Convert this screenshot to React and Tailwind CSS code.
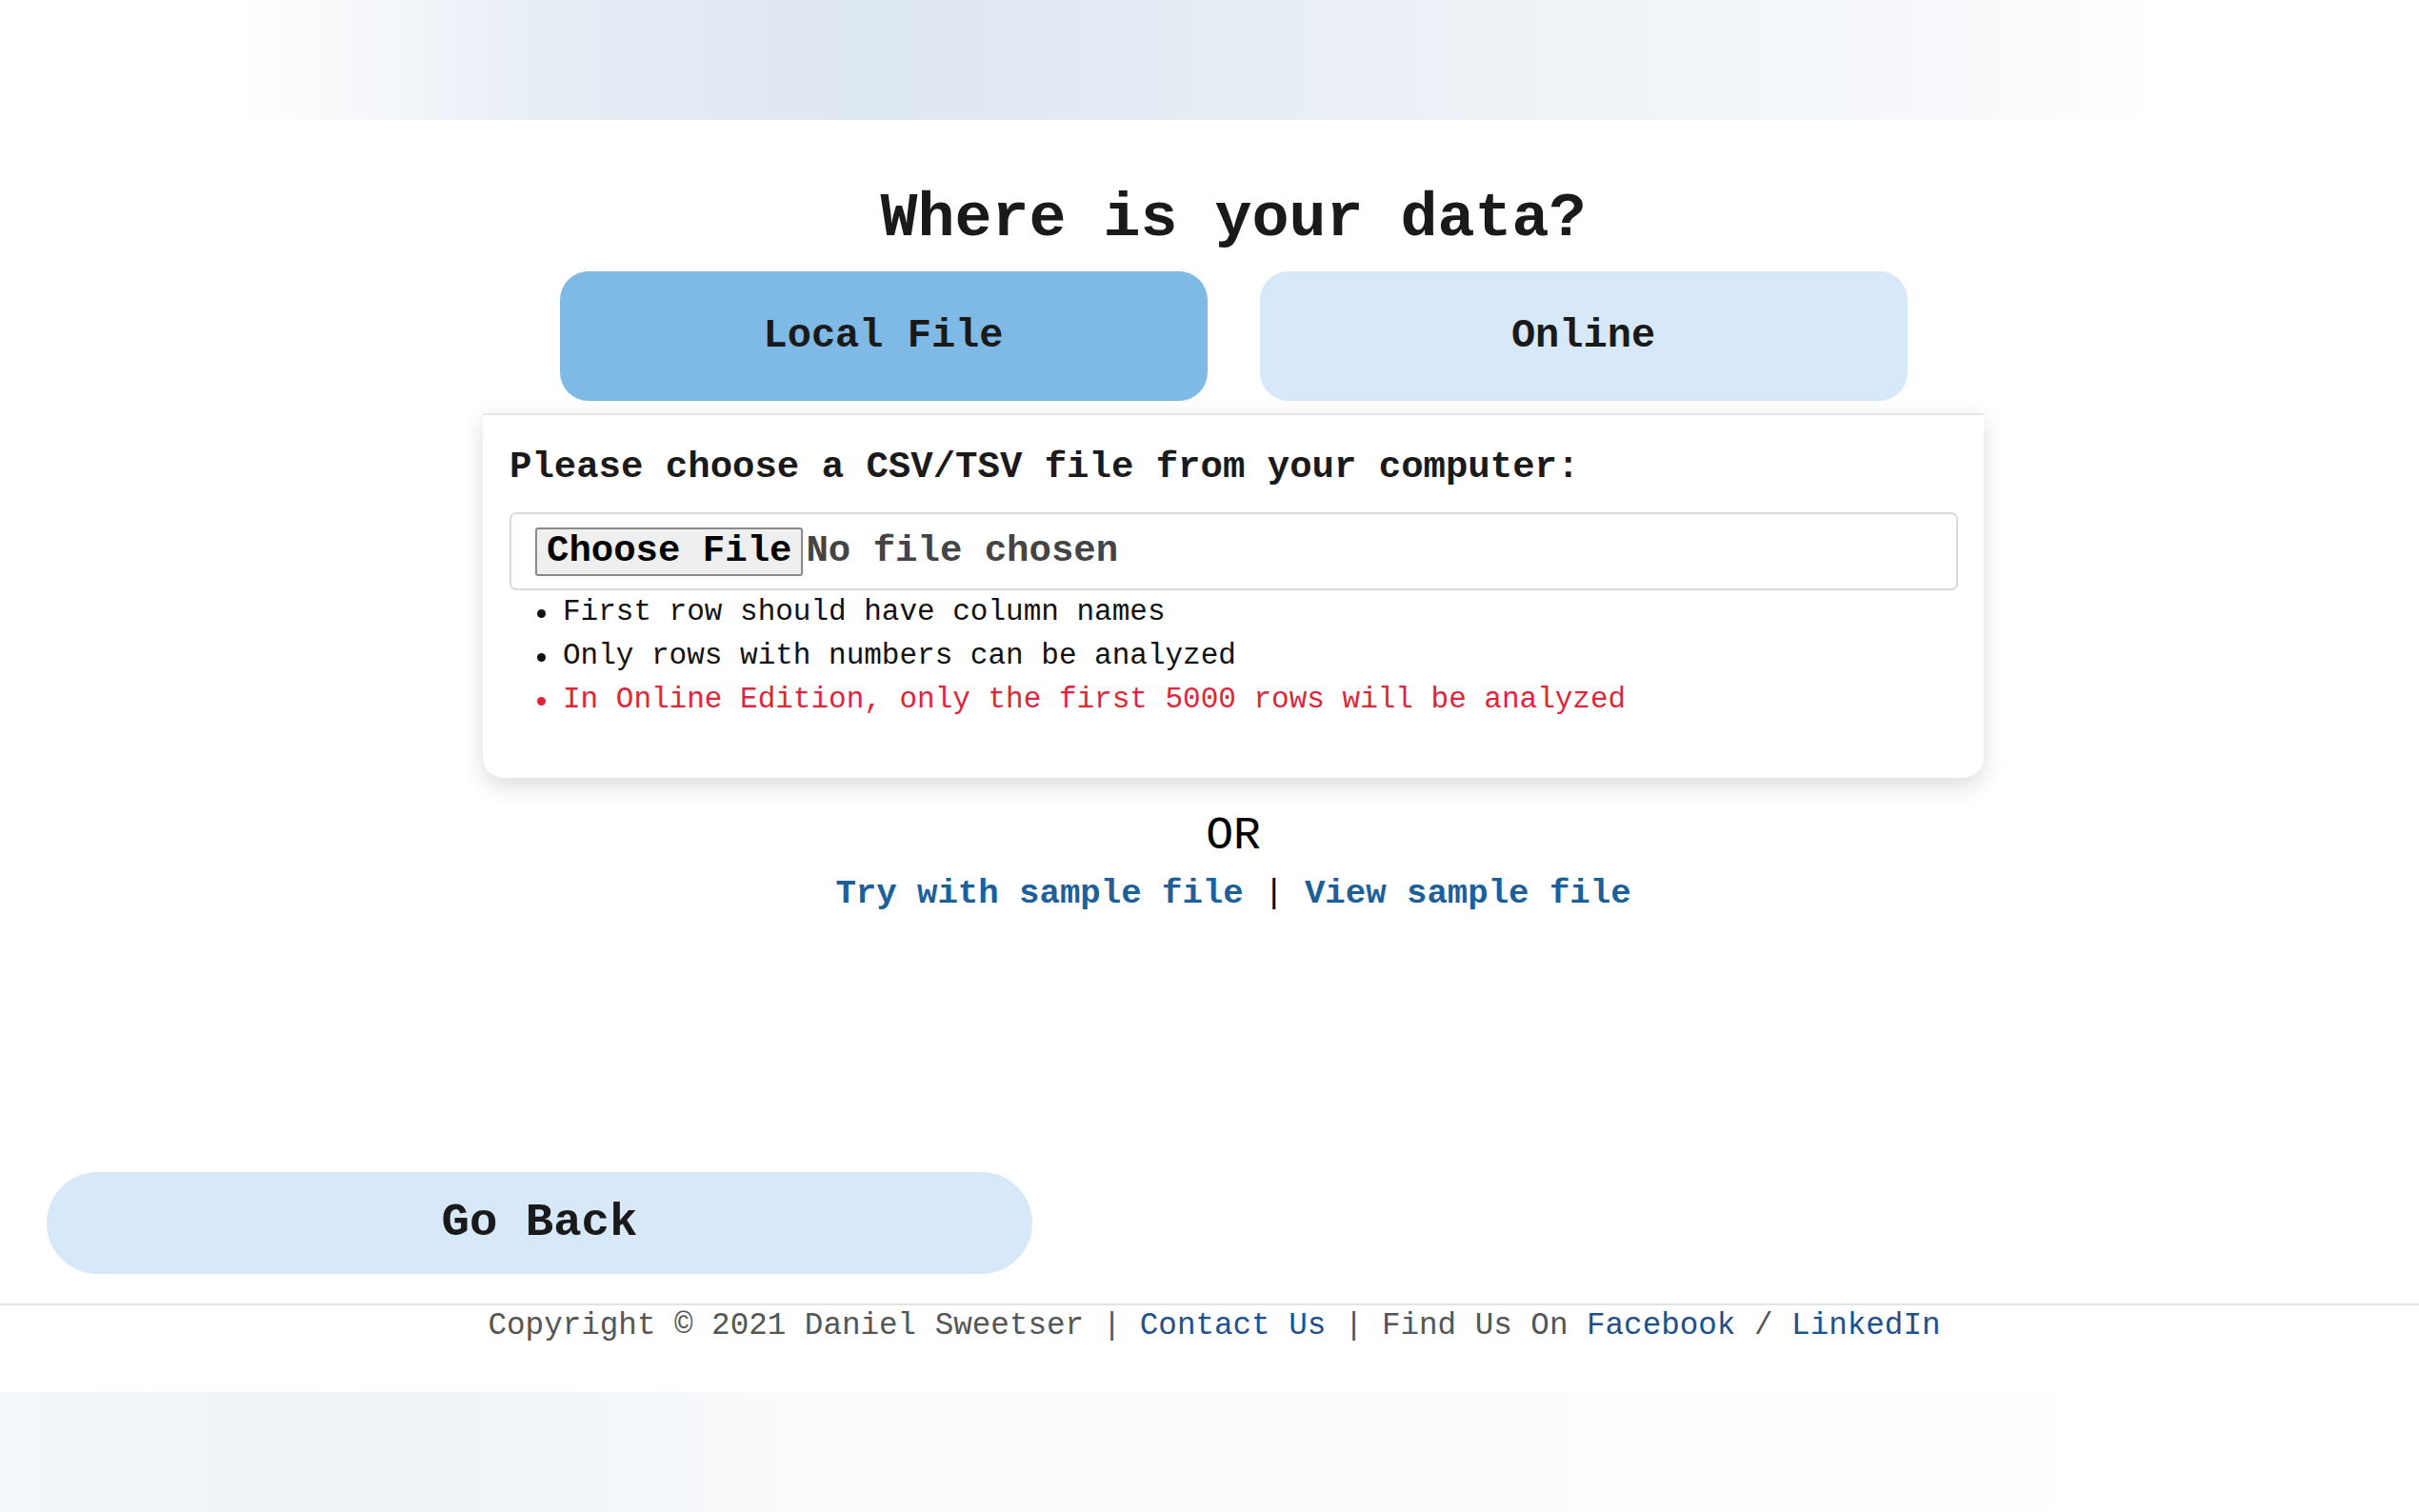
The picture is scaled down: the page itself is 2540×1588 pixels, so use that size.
import React, { useState } from "react";

const mono = { fontFamily: '"Liberation Mono", "Courier New", monospace' };

export default function App() {
  const [source, setSource] = useState("local");

  const notes = [
    { text: "First row should have column names", red: false },
    { text: "Only rows with numbers can be analyzed", red: false },
    { text: "In Online Edition, only the first 5000 rows will be analyzed", red: true },
  ];

  return (
    <div className="min-h-screen bg-white text-[#1a1a1a]" style={mono}>
      {/* top decorative band */}
      <div className="h-[126px] bg-[linear-gradient(90deg,#ffffff_10%,#f6f8fb_15%,#e8eef6_22%,#dde7f2_36%,#e4ebf4_46%,#eef2f7_62%,#f3f6fa_74%,#fafbfd_84%,#ffffff_89%)]" />

      <main className="flex flex-col items-center pl-[50px]">
        <h1 className="mt-[72px] text-[65px] leading-[65px] font-bold">Where is your data?</h1>

        <div className="mt-[22px] flex gap-[55px]">
          <button
            onClick={() => setSource("local")}
            className={`w-[680px] h-[136px] rounded-[30px] text-[42px] font-bold ${source === "local" ? "bg-[#7fbae6]" : "bg-[#d7e8f8]"}`}
          >
            Local File
          </button>
          <button
            onClick={() => setSource("online")}
            className={`w-[680px] h-[136px] rounded-[30px] text-[42px] font-bold ${source === "online" ? "bg-[#7fbae6]" : "bg-[#d7e8f8]"}`}
          >
            Online
          </button>
        </div>

        <div className="mt-[13px] w-[1576px] border-t-2 border-[#e6e6e6] rounded-b-[22px] bg-white shadow-[0_8px_24px_rgba(0,0,0,0.14)] pl-[28px] pr-[27px] pt-[36px] pb-[59px]">
          <p className="text-[39px] leading-[39px] font-bold">Please choose a CSV/TSV file from your computer:</p>

          <div className="mt-[27px] h-[82px] flex items-center border-2 border-[#dadada] rounded-[7px] pl-[25px]">
            <span className="h-[51px] px-[10px] flex items-center bg-[#efefef] border-2 border-[#8a8a8a] rounded-[3px] text-[39px] font-bold text-black">
              Choose File
            </span>
            <span className="ml-[3px] text-[39px] font-bold text-[#444]">No file chosen</span>
          </div>

          <ul>
            {notes.map((n) => (
              <li
                key={n.text}
                className={`flex items-center h-[46px] pl-[29px] text-[31px] ${n.red ? "text-[#e0253a]" : "text-[#111]"}`}
              >
                <span className={`w-[9px] h-[9px] rounded-full mt-[3px] ${n.red ? "bg-[#e0253a]" : "bg-[#111]"}`} />
                <span className="ml-[18px]">{n.text}</span>
              </li>
            ))}
          </ul>
        </div>

        <div className="mt-[37px] text-[48px] leading-[48px] text-black">OR</div>

        <div className="mt-[19px] text-[35.7px] leading-[36px] font-bold">
          <a href="#" className="text-[#1d5f9a]">Try with sample file</a>
          <span className="font-normal text-black"> | </span>
          <a href="#" className="text-[#1d5f9a]">View sample file</a>
        </div>
      </main>

      <button className="mt-[274px] ml-[49px] w-[1035px] h-[107px] rounded-full bg-[#d7e8f8] text-[49px] font-bold">
        Go Back
      </button>

      <footer className="mt-[31px] border-t-2 border-[#e3e3e3]">
        <p className="pt-[2px] pl-[10px] text-center text-[32.6px] leading-[40px] text-[#555]">
          Copyright © 2021 Daniel Sweetser | <a href="#" className="text-[#1e4f8e]">Contact Us</a> | Find Us On{" "}
          <a href="#" className="text-[#1e4f8e]">Facebook</a> / <a href="#" className="text-[#1e4f8e]">LinkedIn</a>
        </p>
      </footer>

      {/* bottom decorative band */}
      <div className="mt-[49px] h-[126px] bg-[linear-gradient(90deg,#f3f7fa_0%,#eef3f8_14%,#f0f5f8_22%,#f7f9fb_30%,#fbfcfc_34%,#fcfcfc_60%,#ffffff_90%)]" />
    </div>
  );
}
